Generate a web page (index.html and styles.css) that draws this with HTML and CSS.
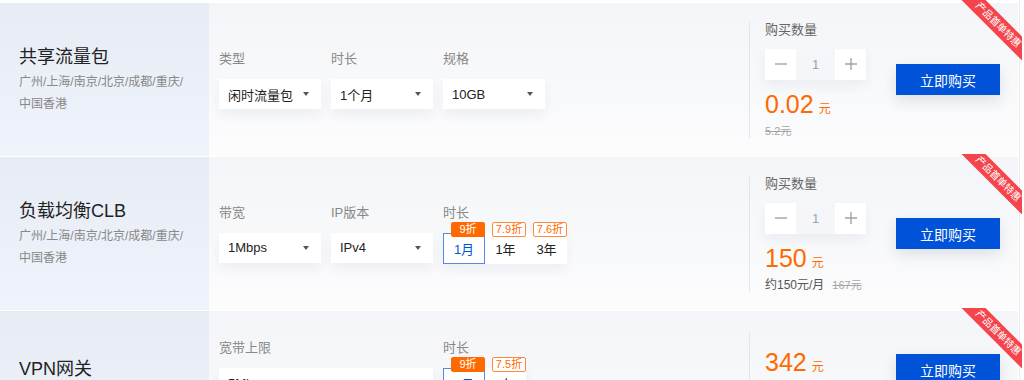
FILE: index.html
```html
<!DOCTYPE html>
<html lang="zh-CN">
<head>
    <meta charset="UTF-8">
    <meta name="viewport" content="width=device-width, initial-scale=1.0">
    <title>产品首单特惠</title>
    <link rel="stylesheet" href="styles.css">
</head>
<body>
<div class="page">

    <!-- 共享流量包 -->
    <div class="card">
        <div class="ribbon"><span>产品首单特惠</span></div>
        <div class="intro">
            <h3 class="intro-title">共享流量包</h3>
            <p class="intro-area">广州/上海/南京/北京/成都/重庆/中国香港</p>
        </div>
        <div class="options">
            <div class="field">
                <div class="field-label">类型</div>
                <div class="select"><span>闲时流量包</span><i class="caret"></i></div>
            </div>
            <div class="field">
                <div class="field-label">时长</div>
                <div class="select"><span>1个月</span><i class="caret"></i></div>
            </div>
            <div class="field">
                <div class="field-label">规格</div>
                <div class="select"><span>10GB</span><i class="caret"></i></div>
            </div>
        </div>
        <div class="buy">
            <div class="qty">
                <div class="qty-label">购买数量</div>
                <div class="stepper">
                    <span class="step-btn"><svg width="12" height="12" viewBox="0 0 12 12"><path d="M0 6h12" stroke="#9ca3ad" stroke-width="1.4"/></svg></span>
                    <span class="step-val">1</span>
                    <span class="step-btn"><svg width="12" height="12" viewBox="0 0 12 12"><path d="M0 6h12M6 0v12" stroke="#9ca3ad" stroke-width="1.4"/></svg></span>
                </div>
                <div class="price"><span class="price-num">0.02</span><span class="price-unit">元</span></div>
                <div class="price-note"><s class="old old-only">5.2元</s></div>
            </div>
            <button class="btn-buy">立即购买</button>
        </div>
    </div>

    <!-- 负载均衡 -->
    <div class="card">
        <div class="ribbon"><span>产品首单特惠</span></div>
        <div class="intro">
            <h3 class="intro-title">负载均衡CLB</h3>
            <p class="intro-area">广州/上海/南京/北京/成都/重庆/中国香港</p>
        </div>
        <div class="options">
            <div class="field">
                <div class="field-label">带宽</div>
                <div class="select"><span>1Mbps</span><i class="caret"></i></div>
            </div>
            <div class="field">
                <div class="field-label">IP版本</div>
                <div class="select"><span>IPv4</span><i class="caret"></i></div>
            </div>
            <div class="field">
                <div class="field-label">时长</div>
                <div class="periods">
                    <span class="period active">1月<em class="badge badge-hot">9折</em></span>
                    <span class="period">1年<em class="badge">7.9折</em></span>
                    <span class="period">3年<em class="badge">7.6折</em></span>
                </div>
            </div>
        </div>
        <div class="buy">
            <div class="qty">
                <div class="qty-label">购买数量</div>
                <div class="stepper">
                    <span class="step-btn"><svg width="12" height="12" viewBox="0 0 12 12"><path d="M0 6h12" stroke="#9ca3ad" stroke-width="1.4"/></svg></span>
                    <span class="step-val">1</span>
                    <span class="step-btn"><svg width="12" height="12" viewBox="0 0 12 12"><path d="M0 6h12M6 0v12" stroke="#9ca3ad" stroke-width="1.4"/></svg></span>
                </div>
                <div class="price"><span class="price-num">150</span><span class="price-unit">元</span></div>
                <div class="price-note">约150元/月<s class="old">167元</s></div>
            </div>
            <button class="btn-buy">立即购买</button>
        </div>
    </div>

    <!-- VPN网关 -->
    <div class="card card-top">
        <div class="ribbon"><span>产品首单特惠</span></div>
        <div class="intro">
            <h3 class="intro-title">VPN网关</h3>
            <p class="intro-area">广州/上海/南京/北京/成都/重庆/中国香港</p>
        </div>
        <div class="options">
            <div class="field">
                <div class="field-label">宽带上限</div>
                <div class="select select-wide"><span>5Mbps</span><i class="caret"></i></div>
            </div>
            <div class="field">
                <div class="field-label">时长</div>
                <div class="periods">
                    <span class="period active">1月<em class="badge badge-hot">9折</em></span>
                    <span class="period">1年<em class="badge">7.5折</em></span>
                </div>
            </div>
        </div>
        <div class="buy">
            <div class="qty">
                <div class="price"><span class="price-num">342</span><span class="price-unit">元</span></div>
                <div class="price-note">约342元/月<s class="old">380元</s></div>
            </div>
            <button class="btn-buy">立即购买</button>
        </div>
    </div>

</div>
</body>
</html>
```

FILE: styles.css
```css
body {
    margin: 0;
    font-family: "Liberation Sans", "Noto Sans CJK SC", sans-serif;
    background: #fff;
    color: #222;
}
.page {
    width: 1020px;
    min-height: 100vh;
    padding-top: 3px;
    box-sizing: border-box;
    border-right: 1px solid #ebebeb;
}
.card {
    position: relative;
    display: flex;
    width: 1018px;
    height: 153px;
    margin-bottom: 1px;
    padding-right: 18px;
    box-sizing: border-box;
    background: linear-gradient(#f3f5f8, #fcfcfd);
}
.card-top {
    height: 170px;
}

/* 角标 */
.ribbon {
    position: absolute;
    top: -3px;
    right: -4px;
    width: 62px;
    height: 62px;
    overflow: hidden;
    z-index: 2;
}
.ribbon::before {
    content: "";
    position: absolute;
    left: -12.5px;
    top: 16px;
    width: 100px;
    height: 17px;
    background: #f5444b;
    transform: rotate(45deg);
}
.ribbon span {
    position: absolute;
    left: 37.5px;
    top: 24.5px;
    font-size: 10px;
    line-height: 10px;
    letter-spacing: -0.2px;
    white-space: nowrap;
    color: #fff;
    transform: translate(-50%, -50%) rotate(45deg);
}

/* 左侧 */
.intro {
    flex: none;
    width: 209px;
    padding: 0 19px;
    box-sizing: border-box;
    display: flex;
    flex-direction: column;
    justify-content: center;
    background: linear-gradient(#e7ebf4, #eff3fc);
}
.intro-title {
    margin: 0;
    font-size: 18px;
    font-weight: normal;
    line-height: 26px;
    color: #222;
}
.intro-area {
    margin: 1px 0 0;
    font-size: 12px;
    line-height: 22px;
    color: #888;
}

/* 中间选项 */
.options {
    flex: 1;
    align-self: center;
    display: flex;
    gap: 10px;
    padding-left: 10px;
}
.field-label {
    font-size: 13px;
    line-height: 17px;
    color: #888;
    margin-bottom: 12px;
}
.select {
    width: 102px;
    height: 30px;
    padding: 0 12px 0 9px;
    box-sizing: border-box;
    display: flex;
    align-items: center;
    justify-content: space-between;
    background: #fff;
    font-size: 13px;
    color: #222;
    box-shadow: 0 6px 12px rgba(30, 50, 90, 0.06);
}
.select-wide {
    width: 214px;
}
.caret {
    width: 0;
    height: 0;
    border-left: 3px solid transparent;
    border-right: 3px solid transparent;
    border-top: 4px solid #555;
}
.periods {
    display: flex;
    box-shadow: 0 6px 12px rgba(30, 50, 90, 0.06);
}
.period {
    position: relative;
    width: 41px;
    height: 31px;
    box-sizing: border-box;
    display: flex;
    align-items: center;
    justify-content: center;
    background: #fff;
    font-size: 13px;
    color: #222;
}
.period.active {
    width: 42px;
    border: 1px solid #5b86e5;
    color: #0052d9;
}
.badge {
    position: absolute;
    top: -11px;
    right: 0;
    width: 34px;
    height: 15px;
    line-height: 13px;
    box-sizing: border-box;
    border: 1px solid #ff8a3d;
    border-radius: 2px;
    background: #fff;
    color: #ff6a00;
    font-size: 11px;
    font-style: normal;
    text-align: center;
}
.period.active .badge {
    right: -1px;
    top: -12px;
}
.badge-hot {
    background: #ff6a00;
    border-color: #ff6a00;
    color: #fff;
}

/* 右侧购买 */
.buy {
    flex: none;
    align-self: center;
    display: flex;
    align-items: center;
}
.qty {
    width: 147px;
    padding-left: 15px;
    box-sizing: border-box;
    border-left: 1px solid #e2e5ea;
}
.qty-label {
    font-size: 13px;
    line-height: 14px;
    color: #666;
    margin: 1px 0 12px;
}
.stepper {
    display: flex;
    width: 101px;
    height: 31px;
    box-shadow: 0 6px 12px rgba(30, 50, 90, 0.06);
}
.step-btn {
    width: 31px;
    display: flex;
    align-items: center;
    justify-content: center;
    background: #fff;
}
.step-val {
    flex: 1;
    display: flex;
    align-items: center;
    justify-content: center;
    font-size: 13px;
    color: #97a3b3;
    background: #f4f6f9;
}
.price {
    margin-top: 9px;
    line-height: 30px;
    color: #ff6a00;
}
.price-num {
    font-size: 25px;
}
.price-unit {
    font-size: 12px;
    margin-left: 5px;
}
.price-note {
    font-size: 12px;
    line-height: 14px;
    color: #555;
}
.old {
    font-size: 11px;
    color: #a6a6a6;
    margin-left: 8px;
}
.old-only {
    margin-left: 0;
}
.btn-buy {
    width: 104px;
    height: 31px;
    border: none;
    background: #0052d9;
    color: #fff;
    font-family: inherit;
    font-size: 14px;
    cursor: pointer;
    box-shadow: 0 6px 14px rgba(30, 50, 90, 0.12);
}

/* 第三张卡片内容偏上 */
.card-top .intro {
    justify-content: flex-start;
    padding-top: 45px;
}
.card-top .options {
    align-self: flex-start;
    padding-top: 28px;
}
.card-top .buy {
    align-self: flex-start;
    align-items: flex-start;
    margin-top: 21px;
}
.card-top .qty {
    height: 119px;
}
.card-top .price {
    margin-top: 15px;
}
.card-top .btn-buy {
    margin-top: 22px;
}
```
